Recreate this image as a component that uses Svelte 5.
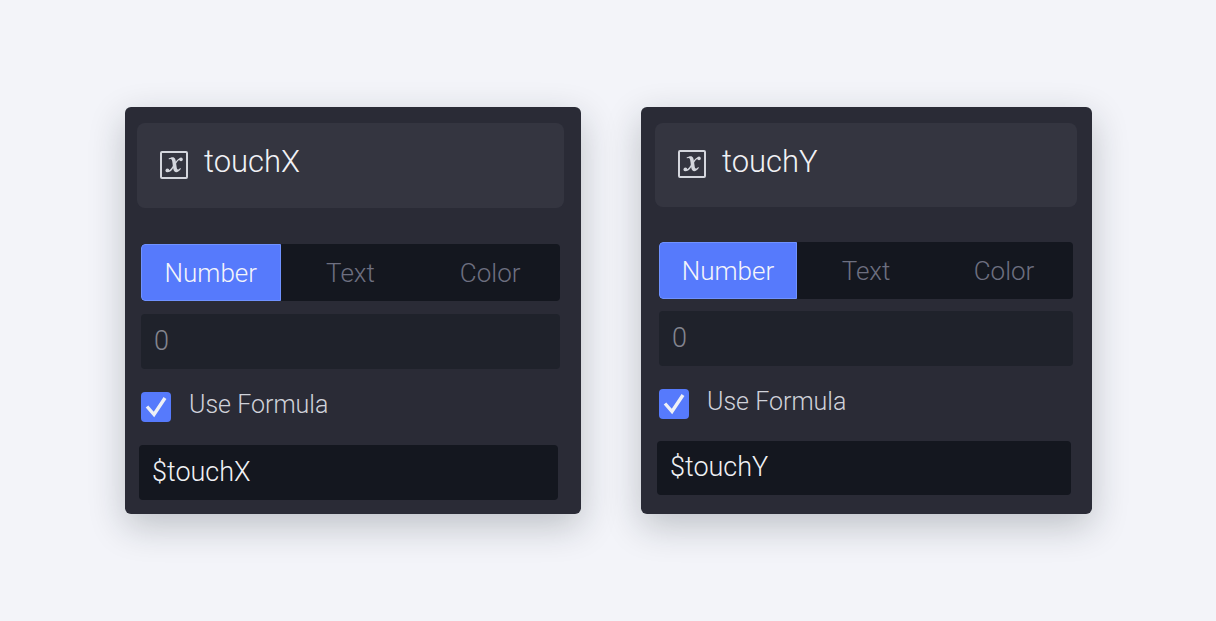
<script>
  const types = ["Number", "Text", "Color"];

  let variables = [
    { name: "touchX", type: "Number", value: "0", useFormula: true, formula: "$touchX" },
    { name: "touchY", type: "Number", value: "0", useFormula: true, formula: "$touchY" },
  ];

  function selectType(index, type) {
    variables[index].type = type;
  }
</script>

<main>
  {#each variables as variable, index}
    <section class="card" class:compact={index === 1}>
      <header>
        <svg class="icon" viewBox="0 0 28 28" aria-hidden="true">
          <rect x="1" y="1" width="26" height="26" rx="1" fill="none" stroke="currentColor" stroke-width="2" />
          <path d="M8.6 7.6C11.4 5.8 14.2 5.4 15.2 8C15.9 9.8 16.2 13.2 16.7 16.6C17 18.9 18 19.3 20.2 17L20.9 17.7C18.6 21.6 14.6 22.6 13.5 18.8C13 16.8 12.7 13.2 12.2 10.2C11.8 8 10.8 7.6 9 8.5Z" fill="currentColor" />
          <path d="M21.4 8C18 6.8 16.4 11 14 14.4C11.8 17.8 10.2 21.4 7 20" fill="none" stroke="currentColor" stroke-width="1.4" />
          <circle cx="21" cy="8.4" r="1.8" fill="currentColor" />
          <circle cx="7.4" cy="19.4" r="1.9" fill="currentColor" />
        </svg>
        <h2>{variable.name}</h2>
      </header>

      <div class="fields">
        <div class="tabs">
          {#each types as type}
            <button
              type="button"
              class:active={variable.type === type}
              aria-pressed={variable.type === type}
              on:click={() => selectType(index, type)}>{type}</button>
          {/each}
        </div>
        <input
          class="value"
          type="text"
          aria-label={`${variable.name} value`}
          readonly={variable.useFormula}
          bind:value={variable.value}>
        <div class="check">
          <input type="checkbox" id={`formula-${index}`} bind:checked={variable.useFormula}>
          <label for={`formula-${index}`}>Use Formula</label>
        </div>
      </div>

      <input
        class="formula"
        type="text"
        aria-label={`${variable.name} formula`}
        disabled={!variable.useFormula}
        bind:value={variable.formula}>
    </section>
  {/each}
</main>

<style>
  :global(body) {
    margin: 0;
    background-color: #f3f4f9;
  }
  main {
    display: grid;
    grid-template-columns: 456fr 451fr;
    gap: 60px;
    padding: 107px 124px 107px 125px;
    font-family: Roboto, "Liberation Sans", sans-serif;
    font-weight: 350;
    color: #f0f1f5;
  }
  .card {
    --tabs-top: 36px;
    --gap: 13px;
    --formula-top: 23px;
    box-sizing: border-box;
    min-width: 0;
    padding: 16px 17px 14px 12px;
    border-radius: 6px;
    background-color: #2a2b36;
    box-shadow: 0 12px 36px rgba(20, 35, 40, 0.24);
  }
  .compact {
    --tabs-top: 35px;
    --gap: 12px;
    --formula-top: 22px;
    padding: 16px 15px 14px 14px;
  }
  header {
    display: flex;
    align-items: center;
    gap: 16px;
    box-sizing: border-box;
    height: 85px;
    padding: 0 23px 2px;
    border-radius: 8px;
    background-color: #343540;
  }
  .compact header {
    height: 84px;
  }
  .icon {
    flex: none;
    width: 28px;
    height: 28px;
    color: #d4d6dd;
  }
  h2 {
    margin: 0;
    padding-bottom: 5px;
    font-size: 31px;
    font-weight: 350;
    line-height: 36px;
  }
  .fields {
    margin: var(--tabs-top) 4px 0;
  }
  .tabs {
    display: grid;
    grid-template-columns: repeat(3, 1fr);
    height: 57px;
    border-radius: 4px;
    background-color: #14171f;
    overflow: hidden;
  }
  button {
    padding: 1px 0 0;
    border: none;
    background-color: transparent;
    color: #6d6f80;
    font: inherit;
    font-size: 26px;
    cursor: pointer;
  }
  .active {
    border: 1px solid #7092ff;
    border-radius: 4px 0 0 4px;
    background-color: #567afc;
    color: #f4f5fa;
  }
  input {
    font: inherit;
  }
  .value,
  .formula {
    display: block;
    box-sizing: border-box;
    height: 55px;
    border: none;
    border-radius: 4px;
    padding: 0 13px 2px;
    font-size: 27px;
  }
  .value {
    width: 100%;
    margin-top: var(--gap);
    background-color: #1f222b;
    color: #83858f;
  }
  .check {
    display: flex;
    align-items: center;
    gap: 18px;
    height: 30px;
    margin-top: 23px;
  }
  .check input {
    appearance: none;
    flex: none;
    width: 30px;
    height: 30px;
    margin: 0;
    border-radius: 4px;
    background-color: #14171f;
  }
  .check input:checked {
    background: #567afc url("data:image/svg+xml,%3Csvg xmlns='http://www.w3.org/2000/svg' viewBox='0 0 30 30'%3E%3Cpath d='M6 14.5L13 22.5L24 6' fill='none' stroke='%23eef0f6' stroke-width='3.4'/%3E%3C/svg%3E") center / 30px 30px no-repeat;
  }
  label {
    padding-bottom: 5px;
    color: #d0d2da;
    font-size: 25px;
    line-height: 30px;
  }
  .formula {
    width: calc(100% - 8px);
    margin: var(--formula-top) 6px 0 2px;
    background-color: #14171f;
    color: #f0f1f5;
  }
  .compact .formula {
    height: 54px;
  }
</style>
